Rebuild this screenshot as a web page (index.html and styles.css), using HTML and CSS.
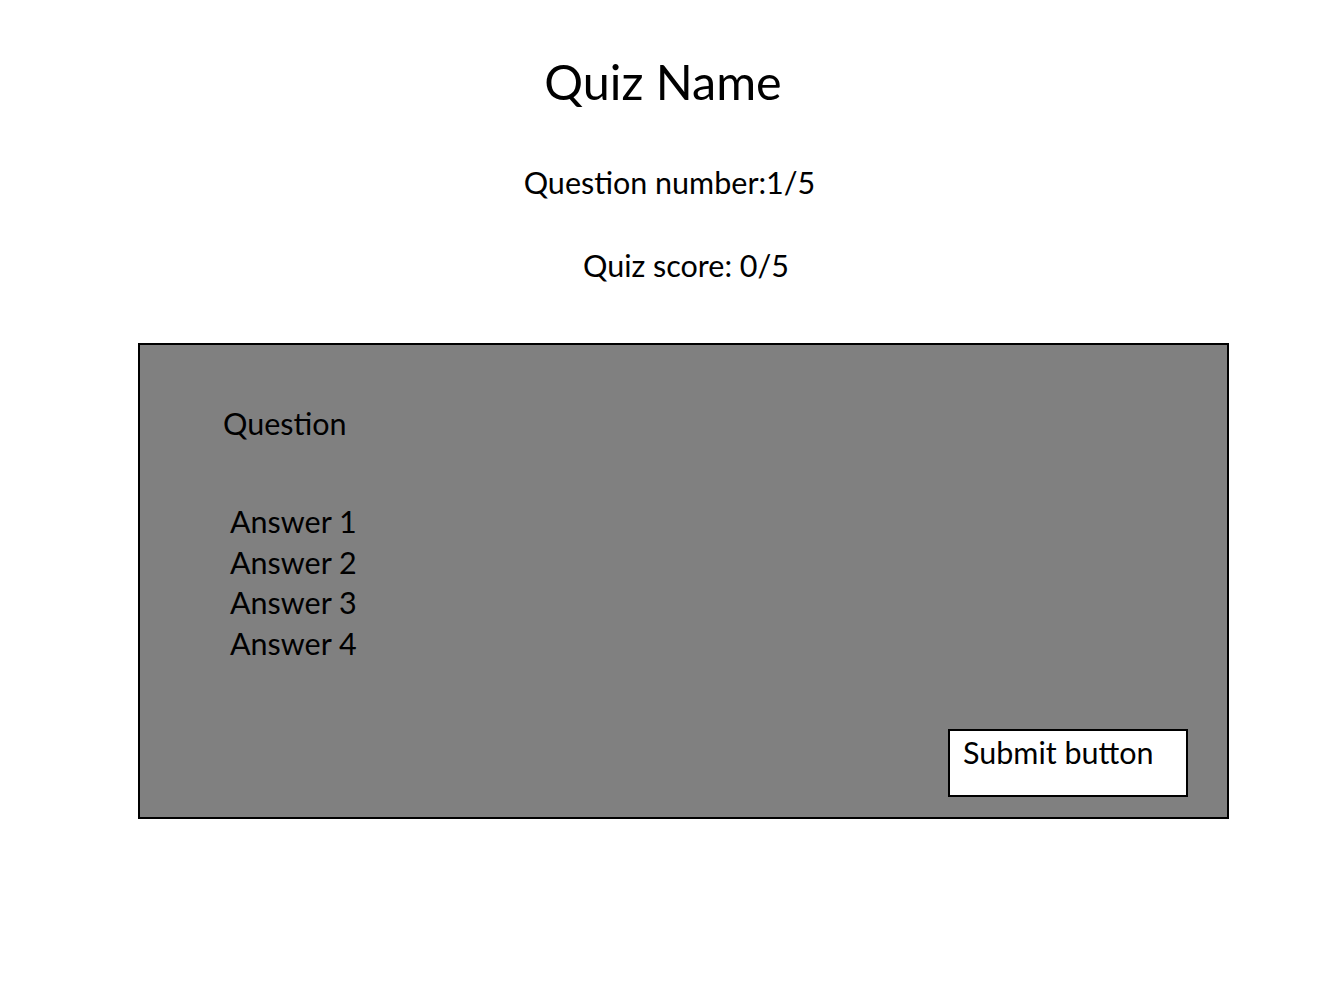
FILE: index.html
```html
<!DOCTYPE html>
<html>
<head>
<meta charset="utf-8">
<link rel="stylesheet" href="styles.css">
</head>
<body>
<div class="page">
  <h1 class="title">Quiz Name</h1>
  <p class="qnum">Question number:1/5</p>
  <p class="score">Quiz score: 0/5</p>
  <div class="card">
    <p class="question">Question</p>
    <ul class="answers">
      <li>Answer 1</li>
      <li>Answer 2</li>
      <li>Answer 3</li>
      <li>Answer 4</li>
    </ul>
    <div class="actions">
      <div class="submit">Submit button</div>
    </div>
  </div>
</div>
</body>
</html>
```
FILE: styles.css
```css
html, body {
  margin: 0;
  padding: 0;
  background: #ffffff;
}
body {
  font-family: Lato, "Open Sans", sans-serif;
  color: #000;
}
.page {
  display: flex;
  flex-direction: column;
  width: 1333px;
}
.title {
  margin: 51px 0 0 0;
  font-size: 48.5px;
  font-weight: 400;
  line-height: 60px;
  text-align: center;
  padding-right: 7px;
}
.qnum {
  margin: 53px 0 0 0;
  font-size: 30.5px;
  line-height: 36px;
  text-align: center;
  padding-left: 6px;
}
.score {
  margin: 47px 0 0 0;
  font-size: 30.5px;
  line-height: 36px;
  text-align: center;
  padding-left: 39px;
}
.card {
  margin: 60px 0 0 138px;
  width: 1087px;
  height: 472px;
  background: #808080;
  border: 2px solid #000;
  display: flex;
  flex-direction: column;
}
.question {
  margin: 60px 0 0 83px;
  font-size: 30.5px;
  line-height: 36px;
}
.answers {
  list-style: none;
  margin: 60px 0 0 90px;
  padding: 0;
  font-size: 30.5px;
  line-height: 40.5px;
}
.actions {
  display: flex;
  justify-content: flex-end;
  margin-top: auto;
  padding: 0 39px 20px 0;
}
.submit {
  width: 223px;
  background: #fff;
  border: 2px solid #000;
  font-size: 30.5px;
  line-height: 36px;
  padding: 3px 0 0 13px;
  box-sizing: content-box;
  height: 61px;
}
```
